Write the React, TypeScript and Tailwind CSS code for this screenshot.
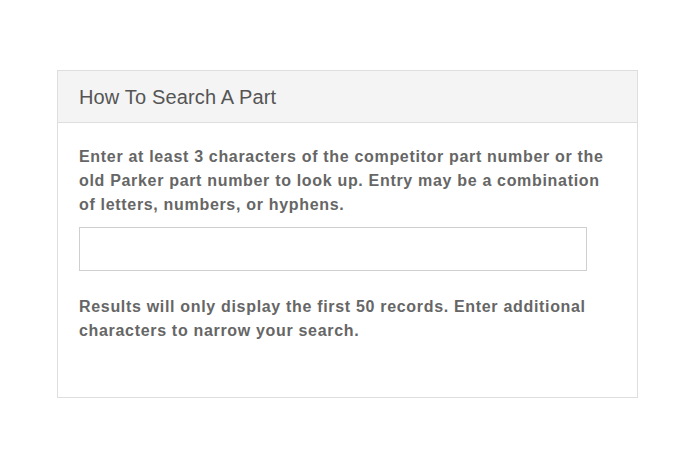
export default function App() {
  return (
    <div className="min-h-[469px] w-[700px] bg-white pl-[57px] pt-[70px] font-['Liberation_Sans',Arial,sans-serif]">
      <div className="w-[581px] border border-[#dedede] bg-white">
        <div className="flex h-[52px] items-center border-b border-[#dedede] bg-[#f4f4f4] px-[21px]">
          <h2 className="text-[20px] tracking-[0.15px] text-[#555]">How To Search A Part</h2>
        </div>
        <div className="px-[21px] pt-[22px] pb-[54px]">
          <p className="w-[532px] text-[16px] leading-[24px] font-bold tracking-[0.68px] text-[#666]">
            Enter at least 3 characters of the competitor part number or the old Parker part number to look up. Entry may be a combination of letters, numbers, or hyphens.
          </p>
          <input
            type="text"
            className="mt-[10px] block h-[44px] w-[508px] border border-[#cfcfcf] bg-white"
          />
          <p className="mt-[24px] w-[532px] text-[16px] leading-[24px] font-bold tracking-[0.68px] text-[#666]">
            Results will only display the first 50 records. Enter additional characters to narrow your search.
          </p>
        </div>
      </div>
    </div>
  );
}
